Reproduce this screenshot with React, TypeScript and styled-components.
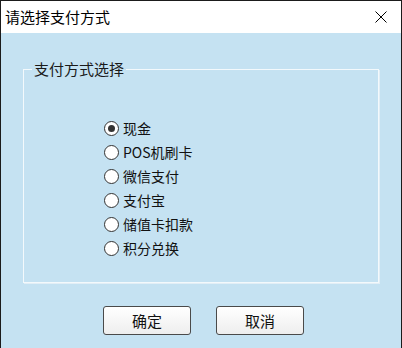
import { useState } from "react";
import styled, { createGlobalStyle } from "styled-components";

const GlobalStyle = createGlobalStyle`
  html, body {
    margin: 0;
    padding: 0;
    height: 100%;
  }
  body {
    font-family: "Noto Sans CJK SC", "Noto Sans", sans-serif;
    color: #000;
  }
  #root {
    height: 100%;
  }
`

const payments = ["现金", "POS机刷卡", "微信支付", "支付宝", "储值卡扣款", "积分兑换"]

export default function App() {
  const [selected, setSelected] = useState(0)

  return (
    <>
      <GlobalStyle />
      <Window>
        <TitleBar>
          <Title>请选择支付方式</Title>
          <CloseButton aria-label="关闭">
            <svg width="12" height="12" viewBox="0 0 12 12">
              <path d="M0.5 0.5 L11.5 11.5 M11.5 0.5 L0.5 11.5" stroke="#000" strokeWidth="1" fill="none" />
            </svg>
          </CloseButton>
        </TitleBar>

        <Body>
          <Group>
            <Legend>支付方式选择</Legend>
            <Options>
              {payments.map((p, i) =>
                <Option key={p} onClick={() => setSelected(i)}>
                  <RadioMark $checked={i === selected} />
                  <Label>{p}</Label>
                </Option>
              )}
            </Options>
          </Group>

          <Buttons>
            <Button>确定</Button>
            <Button>取消</Button>
          </Buttons>
        </Body>
      </Window>
    </>
  )
}

const Window = styled.div`
  display: flex;
  flex-direction: column;
  height: 100%;
  box-sizing: border-box;
  border: 1px solid #1b1b1b;
  border-bottom: none;
  background: #c5e2f2;
`

const TitleBar = styled.div`
  display: flex;
  align-items: center;
  justify-content: space-between;
  height: 32px;
  padding: 0 14px 0 4px;
  background: #fff;
`

const Title = styled.div`
  font-size: 15px;
  line-height: 18px;
  letter-spacing: 0;
`

const CloseButton = styled.div`
  display: flex;
  width: 12px;
  height: 12px;
  margin-top: -1px;
`

const Body = styled.div`
  flex: 1;
  display: flex;
  flex-direction: column;
  padding: 27px 0 0 22px;
`

const Group = styled.fieldset`
  width: 356px;
  box-sizing: border-box;
  margin: 0;
  padding: 0;
  border: 1px solid #f3f9fc;
  box-shadow: 1px 1px 0 #e2eef6;
`

const Legend = styled.legend`
  margin-left: 8px;
  padding: 0 2px;
  font-size: 15px;
  line-height: 18px;
  color: #1a1a1a;
`

const Options = styled.div`
  display: flex;
  flex-direction: column;
  padding: 38px 0 22px 80px;
`

const Option = styled.div`
  display: flex;
  align-items: center;
  height: 24px;
  gap: 4px;
  cursor: default;
`

const RadioMark = styled.span<{ $checked: boolean }>`
  position: relative;
  width: 15px;
  height: 15px;
  box-sizing: border-box;
  border: 1px solid #333;
  border-radius: 50%;
  background: #fff;

  &::after {
    content: "";
    display: ${p => p.$checked ? "block" : "none"};
    position: absolute;
    left: 3px;
    top: 3px;
    width: 7px;
    height: 7px;
    border-radius: 50%;
    background: #333;
  }
`

const Label = styled.span`
  font-size: 14px;
  line-height: 18px;
  color: #111;
`

const Buttons = styled.div`
  display: flex;
  gap: 25px;
  margin-top: 23px;
  padding-left: 80px;
`

const Button = styled.button`
  width: 88px;
  height: 29px;
  box-sizing: border-box;
  padding: 0;
  border: 1.5px solid #4a4a4a;
  border-radius: 3px;
  background: linear-gradient(#ffffff, #eeeeee);
  font-family: "Noto Sans CJK SC", sans-serif;
  font-size: 15px;
  line-height: 18px;
  color: #111;
`
